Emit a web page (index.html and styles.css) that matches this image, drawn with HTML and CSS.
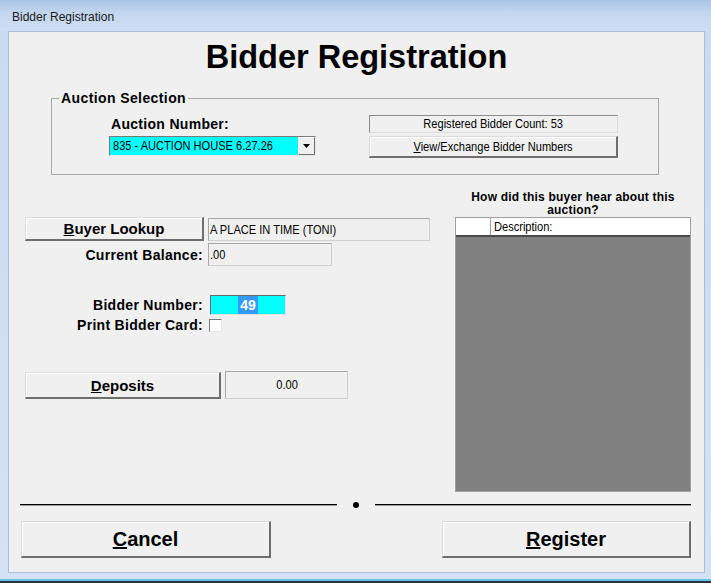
FILE: index.html
```html
<!DOCTYPE html>
<html>
<head>
<meta charset="utf-8">
<title>Bidder Registration</title>
<link rel="stylesheet" href="styles.css">
</head>
<body>
<div class="window">
  <div class="titlebar">Bidder Registration</div>
  <div class="client">
    <h1 class="heading">Bidder Registration</h1>

    <fieldset class="group">
      <legend class="group-legend">Auction Selection</legend>
      <div class="group-body">
        <div class="auction-col">
          <div class="auction-label">Auction Number:</div>
          <div class="combo">
            <span class="combo-text"><span class="nt nt-left">835 - AUCTION HOUSE 6.27.26</span></span>
            <span class="combo-btn">
              <svg width="7" height="4" viewBox="0 0 7 4"><path d="M0 0H7L3.5 4Z" fill="#000"/></svg>
            </span>
          </div>
        </div>
        <div class="count-col">
          <div class="count-box"><span class="nt nt-center">Registered Bidder Count: 53</span></div>
          <div class="btn btn-view"><span class="nt nt-center"><u>V</u>iew/Exchange Bidder Numbers</span></div>
        </div>
      </div>
    </fieldset>

    <div class="middle">
      <div class="left">
        <div class="row row-lookup">
          <div class="btn btn-lookup"><u>B</u>uyer Lookup</div>
          <div class="field field-name"><span class="nt nt-left">A PLACE IN TIME (TONI)</span></div>
        </div>
        <div class="row row-balance">
          <div class="label">Current Balance:</div>
          <div class="field field-balance"><span class="nt nt-left">.00</span></div>
        </div>
        <div class="row row-bidder">
          <div class="label">Bidder Number:</div>
          <div class="bidder-field"><span class="selected">49</span></div>
        </div>
        <div class="row row-print">
          <div class="label">Print Bidder Card:</div>
          <div class="checkbox"></div>
        </div>
        <div class="row row-deposit">
          <div class="btn btn-deposit"><u>D</u>eposits</div>
          <div class="field field-deposit"><span class="nt nt-center">0.00</span></div>
        </div>
      </div>

      <div class="right">
        <div class="source-title">How did this buyer hear about this auction?</div>
        <div class="source-grid">
          <div class="grid-head">
            <div class="grid-corner"></div>
            <div class="grid-col"><span class="nt nt-left">Description:</span></div>
          </div>
          <div class="grid-body"></div>
        </div>
      </div>
    </div>

    <div class="separator">
      <span class="sep-line"></span>
      <span class="sep-dot"></span>
      <span class="sep-line"></span>
    </div>

    <div class="actions">
      <div class="btn btn-big btn-cancel"><u>C</u>ancel</div>
      <div class="btn btn-big btn-register"><u>R</u>egister</div>
    </div>
  </div>
</div>
</body>
</html>
```

FILE: styles.css
```css
* { box-sizing: border-box; }

html, body {
  margin: 0;
  padding: 0;
  background: #1f2a33;
}

.window {
  width: 711px;
  height: 583px;
  background: linear-gradient(#bcd3ec 0px, #c9dbf0 31px, #d3e3f5 100%);
  border-bottom: 2px solid #23323e;
  box-shadow: inset 0 -2px 0 #63c6e4;
  overflow: hidden;
  font-family: "Liberation Sans", Arial, sans-serif;
  color: #000;
}

/* condensed (Arial Narrow-like) text */
.nt {
  display: inline-block;
  font-family: "Liberation Sans", Arial, sans-serif;
  font-size: 13.5px;
  line-height: 16px;
  white-space: nowrap;
  transform: scaleX(0.82);
}

.nt-left { transform-origin: left center; }
.nt-center { transform-origin: center center; }

.titlebar {
  height: 31px;
  padding: 7px 0 0 12px;
  font-size: 12px;
  line-height: 20px;
  color: #1b1b1b;
  background: linear-gradient(#aac4e4, #c2d6ee 40%, #cddff3);
}

.client {
  margin-left: 8px;
  width: 697px;
  height: 542px;
  background: #f0f0f0;
  border: 1px solid #a9bdd6;
}

.heading {
  margin: 7px 0 0;
  font-size: 32.5px;
  line-height: 36px;
  font-weight: bold;
  text-align: center;
}

/* Group box */
.group {
  margin: 16px 45px 0 42px;
  padding: 0;
  min-width: 0;
  border: 1px solid #a8a8a8;
}

.group-legend {
  margin-left: 7px;
  padding: 0 2px;
  font-size: 14px;
  line-height: 15px;
  font-weight: bold;
  letter-spacing: 0.4px;
}

.group-body {
  display: flex;
  align-items: flex-start;
  padding: 9px 0 16px 57px;
}

.auction-col {
  width: 207px;
}

.auction-label {
  margin-top: 1px;
  padding-left: 2px;
  font-size: 14px;
  line-height: 16px;
  font-weight: bold;
  letter-spacing: 0.3px;
}

.combo {
  margin-top: 4px;
  height: 20px;
  display: flex;
  background: #00ffff;
  border: 1px solid;
  border-color: #7a7a7a #e8e8e8 #e8e8e8 #7a7a7a;
}

.combo-text {
  flex: 1;
  min-width: 0;
  overflow: hidden;
  display: flex;
  align-items: center;
  padding-left: 3px;
}

.combo-btn {
  width: 17px;
  display: flex;
  align-items: center;
  justify-content: center;
  background: #f0f0f0;
  border: 1px solid;
  border-color: #ffffff #707070 #707070 #ffffff;
}

.count-col {
  margin-left: 53px;
  width: 249px;
}

.count-box {
  height: 18px;
  display: flex;
  align-items: center;
  justify-content: center;
  border: 1px solid;
  border-color: #8a8a8a #dcdcdc #dcdcdc #8a8a8a;
}

/* Buttons */
.btn {
  display: flex;
  align-items: center;
  justify-content: center;
  background: #f0f0f0;
  border-style: solid;
  border-width: 1px 2px 2px 1px;
  border-color: #dcdcdc #6e6e6e #6e6e6e #dcdcdc;
  box-shadow: inset 1px 1px 0 #ffffff;
}

.btn-view {
  margin-top: 3px;
  height: 22px;
}

.btn-lookup,
.btn-deposit {
  font-size: 15px;
  font-weight: bold;
}

.btn-lookup {
  width: 179px;
  height: 24px;
}

.btn-deposit {
  width: 196px;
  height: 27px;
  align-self: flex-end;
}

.btn-big {
  height: 37px;
  font-size: 20px;
  font-weight: bold;
}

.btn-cancel { width: 250px; }
.btn-register { width: 249px; }

/* Middle area */
.middle {
  display: flex;
  padding-left: 16px;
  height: 318px;
}

.left {
  width: 405px;
}

.row {
  display: flex;
  align-items: center;
  gap: 4px;
}

.row-lookup { margin-top: 42px; height: 24px; }
.row-balance { margin-top: 2px; height: 23px; }
.row-bidder { margin-top: 29px; height: 20px; }
.row-print { margin-top: 3px; height: 14px; }
.row-deposit { margin-top: 39px; height: 28px; align-items: stretch; }

.label {
  width: 179px;
  padding-right: 1px;
  text-align: right;
  font-size: 14px;
  font-weight: bold;
  letter-spacing: 0.3px;
  white-space: nowrap;
}

.field {
  display: flex;
  align-items: center;
  padding-left: 1px;
  overflow: hidden;
  background: #f0f0f0;
  border: 1px solid;
  border-color: #a8a8a8 #d0d0d0 #d0d0d0 #a8a8a8;
}

.field-name {
  width: 222px;
  height: 23px;
  align-self: flex-end;
}

.field-balance {
  width: 124px;
  height: 23px;
}

.field-deposit {
  width: 123px;
  justify-content: center;
}

.bidder-field {
  margin-left: 2px;
  width: 76px;
  height: 20px;
  display: flex;
  justify-content: center;
  background: #00ffff;
  border: 1px solid;
  border-color: #6a6a6a #e0e0e0 #e0e0e0 #6a6a6a;
}

.selected {
  display: flex;
  align-items: center;
  padding: 0 2px;
  background: #3399ff;
  color: #ffffff;
  font-size: 14px;
  font-weight: bold;
}

.checkbox {
  margin-left: 1px;
  width: 13px;
  height: 13px;
  background: #ffffff;
  border: 1px solid;
  border-color: #7a7a7a #e6e6e6 #e6e6e6 #7a7a7a;
}

/* Right panel */
.right {
  margin-left: 25px;
  width: 236px;
  padding-top: 16px;
}

.source-title {
  font-size: 12px;
  line-height: 13px;
  font-weight: bold;
  letter-spacing: 0.2px;
  text-align: center;
}

.source-grid {
  height: 275px;
  display: flex;
  flex-direction: column;
  border: 1px solid #a0a0a0;
}

.grid-head {
  height: 19px;
  display: flex;
  background: #ffffff;
  border-bottom: 2px solid #4a4a4a;
}

.grid-corner {
  width: 35px;
  border-right: 1px solid #a0a0a0;
}

.grid-col {
  flex: 1;
  min-width: 0;
  overflow: hidden;
  display: flex;
  align-items: center;
  padding-left: 3px;
}

.grid-body {
  flex: 1;
  background: #808080;
}

/* Separator */
.separator {
  display: flex;
  align-items: center;
  margin-top: 8px;
  height: 6px;
  padding: 0 13px 0 11px;
}

.sep-line {
  flex: 1;
  height: 1px;
  background: #000;
  box-shadow: 0 1px 0 #9a9a9a;
}

.sep-dot {
  width: 6px;
  height: 6px;
  margin: 2px 16px 0;
  border-radius: 50%;
  background: #000;
}

.actions {
  display: flex;
  justify-content: space-between;
  margin-top: 14px;
  padding: 0 13px 0 12px;
}
```
